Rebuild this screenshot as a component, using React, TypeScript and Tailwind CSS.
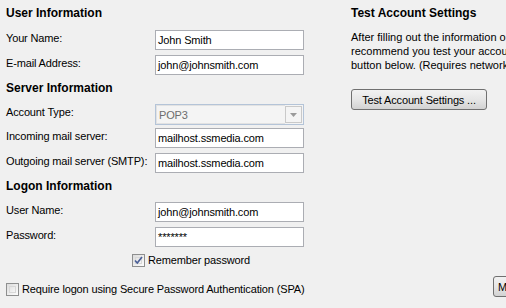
import React from "react";

// Windows-7 style mail account settings pane (left: fields, right: test panel)

const Field = ({ label, value }: { label: string; value: string }) => (
  <div className="flex items-start h-[20px]">
    <span className="w-[149px] pt-[1px] leading-[14px] whitespace-nowrap">{label}</span>
    <div className="w-[149px] h-[20px] border border-[#abadb3] bg-white px-[2px] leading-[18px] whitespace-nowrap overflow-hidden">
      {value}
    </div>
  </div>
);

const Heading = ({ children }: { children: React.ReactNode }) => (
  <div className="font-bold text-[12px] tracking-normal leading-[14px] h-[14px] whitespace-nowrap">{children}</div>
);

const CheckBox = ({ checked }: { checked?: boolean }) => (
  <span className="relative inline-block w-[13px] h-[13px] border border-[#8e8f8f] bg-gradient-to-br from-[#dcdcdc] to-[#fdfdfd] shrink-0">
    <span className="absolute inset-[2px] border border-[#d8d8d8] bg-gradient-to-br from-[#e4e4e4] to-[#f6f6f6]" />
    {checked && (
      <svg className="absolute inset-0" width="11" height="11" viewBox="0 0 11 11">
        <path d="M2 5.5 L4.3 8 L9 2" fill="none" stroke="#4a5f97" strokeWidth="1.7" />
      </svg>
    )}
  </span>
);

const Win7Button = ({ children, className = "" }: { children: React.ReactNode; className?: string }) => (
  <div
    className={`h-[21px] border border-[#707070] rounded-[3px] bg-gradient-to-b from-[#f2f2f2] via-[#e6e6e6] to-[#d2d2d2] flex items-center whitespace-nowrap leading-[14px] ${className}`}
  >
    {children}
  </div>
);

export default function App() {
  return (
    <div
      className="w-[506px] h-[308px] overflow-hidden bg-[#f0f0f0] text-black text-[11px] tracking-[-0.15px] flex"
      style={{ fontFamily: '"Liberation Sans", Arial, sans-serif' }}
    >
      {/* Left column */}
      <div className="w-[298px] ml-[6px] pt-[6px] flex flex-col shrink-0">
        <Heading>User Information</Heading>
        <div className="mt-[10px]">
          <Field label="Your Name:" value="John Smith" />
        </div>
        <div className="mt-[5px]">
          <Field label="E-mail Address:" value="john@johnsmith.com" />
        </div>

        <div className="mt-[6px]">
          <Heading>Server Information</Heading>
        </div>
        <div className="mt-[9px] flex items-start h-[21px]">
          <span className="w-[149px] pt-[1px] leading-[14px]">Account Type:</span>
          <div className="w-[149px] h-[21px] border border-[#b4c4d8] bg-[#f4f4f4] flex items-stretch">
            <div className="flex-1 px-[2px] leading-[18px] text-[#6d6d6d] border-y border-l border-[#e2e2e2]">POP3</div>
            <div className="w-[17px] my-[1px] mr-[1px] border border-[#c9c9c9] bg-[#f4f4f4] flex items-center justify-center">
              <svg width="7" height="4" viewBox="0 0 7 4">
                <path d="M0 0 H7 L3.5 4 Z" fill="#9a9a9a" />
              </svg>
            </div>
          </div>
        </div>
        <div className="mt-[3px]">
          <Field label="Incoming mail server:" value="mailhost.ssmedia.com" />
        </div>
        <div className="mt-[5px]">
          <Field label="Outgoing mail server (SMTP):" value="mailhost.ssmedia.com" />
        </div>

        <div className="mt-[6px]">
          <Heading>Logon Information</Heading>
        </div>
        <div className="mt-[9px]">
          <Field label="User Name:" value="john@johnsmith.com" />
        </div>
        <div className="mt-[5px]">
          <Field label="Password:" value="*******" />
        </div>

        <div className="mt-[6px] flex items-center gap-[3px] pl-[126px] h-[14px]">
          <CheckBox checked />
          <span className="leading-[14px]">Remember password</span>
        </div>

        <div className="mt-[15px] flex items-center gap-[3px] h-[14px]">
          <CheckBox />
          <span className="leading-[14px] whitespace-nowrap">
            Require logon using Secure Password Authentication (SPA)
          </span>
        </div>
      </div>

      {/* Right column */}
      <div className="ml-[47px] pt-[6px] w-[300px] shrink-0 flex flex-col">
        <Heading>Test Account Settings</Heading>
        <p className="mt-[10px] leading-[14px] whitespace-nowrap tracking-normal">
          After filling out the information on this screen, we
          <br />
          recommend you test your account by clicking the
          <br />
          button below. (Requires network connection)
        </p>
        <div className="mt-[17px] flex">
          <Win7Button className="w-[136px] justify-center">Test Account Settings ...</Win7Button>
        </div>
        <div className="mt-auto mb-[11px] flex pl-[142px]">
          <Win7Button className="pl-[4px] pr-[10px]">More Settings ...</Win7Button>
        </div>
      </div>
    </div>
  );
}
